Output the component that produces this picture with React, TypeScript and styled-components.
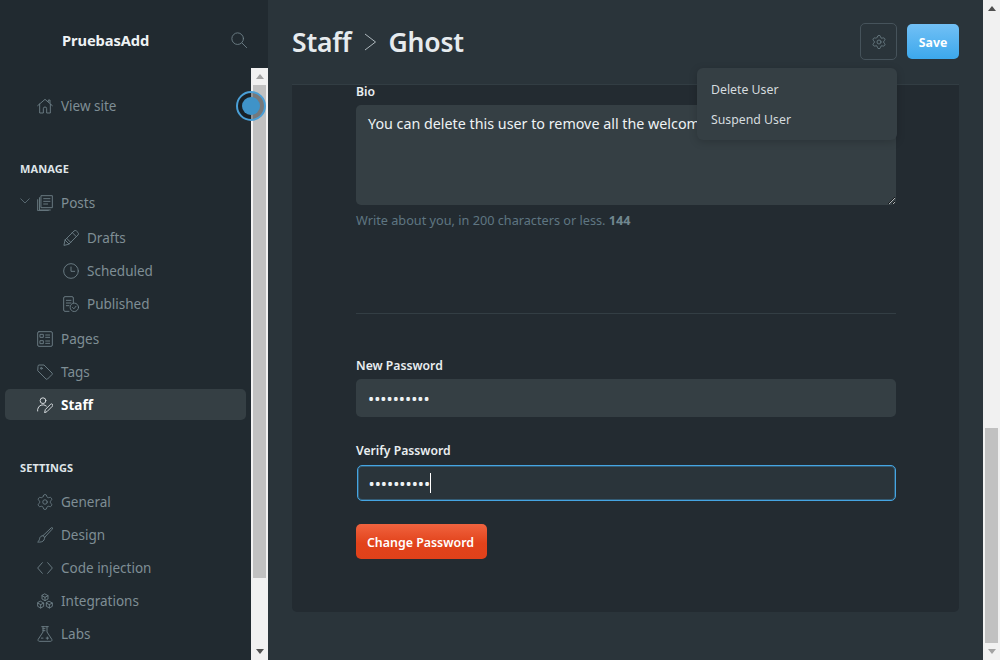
import React from "react";
import styled, { createGlobalStyle } from "styled-components";
import { Settings } from "lucide-react";

const Global = createGlobalStyle`
  html, body { margin: 0; padding: 0; height: 100%; overflow: hidden; background: #2a343a; }
  body { font-family: "Noto Sans", "Open Sans", sans-serif; }
  * { box-sizing: border-box; }
`;

const Page = styled.div`
  display: flex;
  width: 1000px;
  height: 660px;
  overflow: hidden;
  background: #2a343a;
`;
const Sidebar = styled.aside`
  display: flex;
  flex-direction: column;
  flex: 0 0 268px;
  background: #212a30;
`;
const Brand = styled.header`
  display: flex;
  align-items: center;
  justify-content: space-between;
  flex: 0 0 68px;
  padding: 12px 21px 0 62px;
`;
const BrandName = styled.span`
  color: #eef2f4;
  font-size: 14.7px;
  font-weight: 700;
  letter-spacing: -0.1px;
`;
const SideBody = styled.div`
  position: relative;
  display: flex;
  flex: 1;
  min-height: 0;
`;
const Nav = styled.nav`
  flex: 1;
  min-width: 0;
  overflow: hidden;
  padding: 22px 5px 0;
`;
const Section = styled.div<{ $top: number }>`
  padding-top: ${(p) => p.$top}px;
`;
const SectionTitle = styled.div`
  height: 16px;
  line-height: 16px;
  margin: 0 0 10px 15px;
  color: #dfe5e8;
  font-size: 11px;
  font-weight: 700;
  letter-spacing: 0.1px;
`;
const Row = styled.div<{ $active?: boolean; $sub?: boolean }>`
  position: relative;
  display: flex;
  align-items: center;
  gap: 8px;
  width: 241px;
  height: 31px;
  margin-bottom: 2px;
  padding-left: ${(p) => (p.$sub ? 58 : 32)}px;
  border-radius: 5px;
  background: ${(p) => (p.$active ? "#353f44" : "transparent")};
  color: ${(p) => (p.$active ? "#ffffff" : "#7f8e95")};
  font-size: 13.5px;
  font-weight: ${(p) => (p.$active ? 700 : 400)};
`;
const SubList = styled.div`
  padding: 2px 0;
`;
const Chevron = styled.span`
  position: absolute;
  left: 15px;
  top: 11px;
  display: flex;
  color: #5d6e76;
`;
const IconSvg = styled.svg<{ $light?: boolean }>`
  flex: 0 0 16px;
  width: 16px;
  height: 16px;
  fill: none;
  stroke: ${(p) => (p.$light ? "#e4e9ec" : "#6f8189")};
  stroke-width: 1.35;
  stroke-linecap: round;
  stroke-linejoin: round;
`;
const Track = styled.div`
  display: flex;
  flex-direction: column;
  flex: 0 0 17px;
  width: 17px;
  background: #f1f1f1;
`;
const Arrow = styled.div<{ $down?: boolean; $dim?: boolean }>`
  display: flex;
  align-items: center;
  justify-content: center;
  flex: 0 0 17px;
  &::before {
    content: "";
    border-left: 4.5px solid transparent;
    border-right: 4.5px solid transparent;
    ${(p) => (p.$down ? "border-top" : "border-bottom")}: 5px solid ${(p) => (p.$dim ? "#a3a3a3" : "#505050")};
  }
`;
const TrackBody = styled.div`
  flex: 1;
  padding: 0 2px;
`;
const Thumb = styled.div<{ $top: number; $height: number }>`
  margin-top: ${(p) => p.$top}px;
  height: ${(p) => p.$height}px;
  background: #c1c1c1;
`;
const Pulse = styled.div`
  position: absolute;
  left: 236px;
  top: 23px;
  width: 30px;
  height: 30px;
  border-radius: 50%;
  border: 2px solid #4a9fd6;
  background: rgba(14, 22, 28, 0.42);
  display: flex;
  align-items: center;
  justify-content: center;
  &::after {
    content: "";
    width: 18px;
    height: 18px;
    border-radius: 50%;
    background: #3f93c8;
  }
`;
const MainColumn = styled.main`
  flex: 1;
  min-width: 0;
  display: flex;
  flex-direction: column;
  padding: 0 24px;
`;
const TopBar = styled.header`
  display: flex;
  align-items: center;
  justify-content: space-between;
  flex: 0 0 85px;
  padding-bottom: 1px;
  border-bottom: 1px solid #323d43;
`;
const Title = styled.h1`
  display: flex;
  align-items: center;
  gap: 12px;
  margin: 0;
  color: #e6ebee;
  font-size: 26.5px;
  font-weight: 600;
  letter-spacing: -0.2px;
`;
const Actions = styled.div`
  display: flex;
  align-items: center;
  gap: 10px;
`;
const Menu = styled.div`
  position: relative;
`;
const GearButton = styled.button`
  display: flex;
  align-items: center;
  justify-content: center;
  width: 37px;
  height: 37px;
  padding: 0;
  border: 1px solid #46535b;
  border-radius: 5px;
  background: transparent;
  color: #6f8189;
`;
const Dropdown = styled.div`
  position: absolute;
  top: 45px;
  right: 0;
  z-index: 3;
  width: 200px;
  padding: 7px 0 5px;
  border-radius: 6px;
  background: #353f44;
  box-shadow: 0 2px 8px rgba(0, 0, 0, 0.18);
`;
const DropItem = styled.div`
  height: 30px;
  line-height: 30px;
  padding: 0 14px;
  color: #d5dcdf;
  font-size: 12.3px;
`;
const SaveButton = styled.button`
  width: 52px;
  height: 35px;
  padding: 1px 0 0;
  border: 0;
  border-radius: 5px;
  background: linear-gradient(#72c0f5, #3ca8ec);
  color: #fff;
  font-family: inherit;
  font-size: 12.3px;
  font-weight: 700;
`;
const Card = styled.section`
  padding: 0 63px 53px 64px;
  border-radius: 0 0 5px 5px;
  background: #232b31;
`;
const Label = styled.label<{ $top?: number; $gap?: number }>`
  display: block;
  margin-top: ${(p) => p.$top ?? 0}px;
  margin-bottom: ${(p) => p.$gap ?? 7}px;
  height: 13px;
  line-height: 13px;
  color: #e9eef0;
  font-size: 12.2px;
  font-weight: 600;
`;
const Bio = styled.textarea`
  display: block;
  width: 540px;
  height: 100px;
  padding: 9px 12px;
  border: 0;
  border-radius: 5px;
  outline: none;
  background: #353f44;
  color: #eef2f4;
  font-family: inherit;
  font-size: 14.3px;
  line-height: 20px;
`;
const Hint = styled.p`
  margin: 7px 0 0;
  line-height: 16px;
  color: #5f7682;
  font-size: 12.7px;
  b {
    font-weight: 700;
    color: #71878f;
  }
`;
const Rule = styled.hr`
  height: 1px;
  margin: 85px 0 45px;
  border: 0;
  background: #333e44;
`;
const FieldWrap = styled.div`
  position: relative;
`;
const Input = styled.input<{ $focus?: boolean }>`
  display: block;
  width: ${(p) => (p.$focus ? 539 : 540)}px;
  height: ${(p) => (p.$focus ? 36 : 38)}px;
  margin-left: ${(p) => (p.$focus ? 0.5 : 0)}px;
  padding: 0 ${(p) => (p.$focus ? 11 : 12)}px;
  border: ${(p) => (p.$focus ? "1px solid #45a5e2" : "0")};
  box-shadow: ${(p) => (p.$focus ? "inset 0 0 0 1px rgba(69,165,226,0.35)" : "none")};
  border-radius: 5px;
  outline: none;
  background: ${(p) => (p.$focus ? "#2a343a" : "#353f44")};
  color: #eef2f4;
  font-family: inherit;
  font-size: 16.4px;
`;
const Caret = styled.span`
  position: absolute;
  left: 74px;
  top: 8px;
  width: 1px;
  height: 20px;
  background: #fff;
`;
const DangerButton = styled.button`
  display: block;
  width: 131px;
  height: 35px;
  margin-top: 23px;
  padding: 1px 2px 0 0;
  border: 0;
  border-radius: 5px;
  background: linear-gradient(#f0633f 0%, #e2431b 55%, #e0411a 100%);
  color: #fff;
  font-family: inherit;
  font-size: 12.4px;
  font-weight: 600;
`;

const Icon = ({ children, light }: { children: React.ReactNode; light?: boolean }) => (
  <IconSvg viewBox="0 0 24 24" $light={light}>
    {children}
  </IconSvg>
);

const icons: Record<string, React.ReactNode> = {
  home: <path d="M1 11.5 12 2l11 9.5M4 9v13.5h5.5V16a2.5 2.5 0 0 1 5 0v6.5H20V9M17 5V3h2.5v4.2" />,
  posts: <path d="M6.5 1h16.5v18H6.5zM3.7 4v18.5H20M1 7v16.5h16M10 5.5h9.5M10 9.5h9.5M10 13.5h6" />,
  pencil: <path d="M1.5 22.5 3 15 16.5 1.5a2.6 2.6 0 0 1 3.7 0l2.3 2.3a2.6 2.6 0 0 1 0 3.7L9 21zM3 15l6 6M14 4l6 6M5.5 12.5l6 6" />,
  clock: (
    <>
      <circle cx="12" cy="12" r="11" />
      <path d="M12 6v6.5h5.5" />
    </>
  ),
  published: (
    <>
      <path d="M15.5 10V3a2 2 0 0 0-2-2H3a2 2 0 0 0-2 2v18a2 2 0 0 0 2 2h6M5 6.5h7M5 10.5h7M5 14.5h4" />
      <circle cx="17" cy="17" r="6.3" />
      <path d="m14.3 17.2 2 2 3.2-3.8" />
    </>
  ),
  pages: (
    <>
      <rect x="1" y="1" width="22" height="22" rx="2" />
      <path d="M5 5h4.5v4.5H5zM5 14.5h4.5V19H5zM13 6h6M13 9.5h6M13 15h6M13 18.5h6" />
    </>
  ),
  tag: (
    <>
      <path d="M1.5 3A1.5 1.5 0 0 1 3 1.5h7.5l12 12a1.6 1.6 0 0 1 0 2.3l-6.7 6.7a1.6 1.6 0 0 1-2.3 0l-12-12z" />
      <circle cx="6.5" cy="6.5" r="1.3" />
    </>
  ),
  staff: (
    <>
      <circle cx="9" cy="5.5" r="4.3" />
      <path d="M1 21v-2.5a8 8 0 0 1 13-5M11.5 23l1-4.2 8-8a2 2 0 0 1 2.8 2.8l-8 8z" />
    </>
  ),
  brush: <path d="M23 1.500c-.6-.6-1.400-.6-2 0L9 13l2.500 2.500L22.500 3.500c.6-.6 1.100-1.400.5-2zM9 13c-2.500 0-4.500 1.500-5 4-.3 2-1 4-3 5.500 3.500.5 8 0 9.500-3 .7-1.500.8-2.700 1-4" />,
  code: <path d="M8 4 1 12l7 8M16 4l7 8-7 8" />,
  integrations: (
    <path d="M12 1.500 16.500 4v5L12 11.500 7.500 9V4zM7.500 4 12 6.500 16.500 4M12 6.500v5M5.500 12.500 10 15v5l-4.500 2.500L1 20v-5zM1 15l4.500 2.500L10 15M5.500 17.500v5M18.500 12.500 23 15v5l-4.500 2.500L14 20v-5zM14 15l4.500 2.500L23 15M18.500 17.500v5" />
  ),
  labs: (
    <path d="M7 1h10M9 1v8L1.800 20a2 2 0 0 0 1.700 3h17a2 2 0 0 0 1.700-3L15 9V1M9 4h3M9 7h3M15.500 16.500v3.500M13.700 18.200h3.600M6.500 18.200h2.500" />
  ),
};

const NavItem = ({ icon, label, sub, active }: { icon: string; label: string; sub?: boolean; active?: boolean }) => (
  <Row $sub={sub} $active={active}>
    <Icon light={active}>{icons[icon]}</Icon>
    {label}
  </Row>
);

const GeneralGear = styled(Settings)`
  flex: 0 0 18px;
  margin: 0 -1px;
  color: #6f8189;
`;

export default function App() {
  return (
    <Page>
      <Global />
      <Sidebar>
        <Brand>
          <BrandName>PruebasAdd</BrandName>
          <Icon>
            <circle cx="10" cy="10" r="8.700" />
            <path d="m16.500 16.500 7 7" />
          </Icon>
        </Brand>
        <SideBody>
          <Nav>
            <NavItem icon="home" label="View site" />
            <Section $top={38}>
              <SectionTitle>MANAGE</SectionTitle>
              <Row>
                <Chevron>
                  <svg width="10" height="6" viewBox="0 0 10 6" fill="none" stroke="currentColor" strokeWidth="0.9">
                    <path d="m.5.500 4.500 4.500L9.500.500" />
                  </svg>
                </Chevron>
                <Icon>{icons.posts}</Icon>
                Posts
              </Row>
              <SubList>
                <NavItem sub icon="pencil" label="Drafts" />
                <NavItem sub icon="clock" label="Scheduled" />
                <NavItem sub icon="published" label="Published" />
              </SubList>
              <NavItem icon="pages" label="Pages" />
              <NavItem icon="tag" label="Tags" />
              <NavItem active icon="staff" label="Staff" />
            </Section>
            <Section $top={38}>
              <SectionTitle>SETTINGS</SectionTitle>
              <Row>
                <GeneralGear size={18} strokeWidth={1.100} />
                General
              </Row>
              <NavItem icon="brush" label="Design" />
              <NavItem icon="code" label="Code injection" />
              <NavItem icon="integrations" label="Integrations" />
              <NavItem icon="labs" label="Labs" />
            </Section>
          </Nav>
          <Track>
            <Arrow $dim />
            <TrackBody>
              <Thumb $top={0} $height={493} />
            </TrackBody>
            <Arrow $down />
          </Track>
          <Pulse />
        </SideBody>
      </Sidebar>
      <MainColumn>
        <TopBar>
          <Title>
            Staff
            <svg width="13" height="18" viewBox="0 0 13 18" fill="none" stroke="#aeb8bd" strokeWidth="1">
              <path d="m1 1 10.500 8L1 17" />
            </svg>
            Ghost
          </Title>
          <Actions>
            <Menu>
              <GearButton aria-label="Settings">
                <Settings size={16} strokeWidth={1.200} />
              </GearButton>
              <Dropdown>
                <DropItem>Delete User</DropItem>
                <DropItem>Suspend User</DropItem>
              </Dropdown>
            </Menu>
            <SaveButton>Save</SaveButton>
          </Actions>
        </TopBar>
        <Card>
          <Label>Bio</Label>
          <Bio readOnly value="You can delete this user to remove all the welcome posts" />
          <Hint>
            Write about you, in 200 characters or less. <b>144</b>
          </Hint>
          <Rule />
          <Label>New Password</Label>
          <Input type="password" readOnly value="••••••••••" />
          <Label $top={27} $gap={8}>
            Verify Password
          </Label>
          <FieldWrap>
            <Input $focus type="password" readOnly value="••••••••••" />
            <Caret />
          </FieldWrap>
          <DangerButton>Change Password</DangerButton>
        </Card>
      </MainColumn>
      <Track>
        <Arrow />
        <TrackBody>
          <Thumb $top={411} $height={215} />
        </TrackBody>
        <Arrow $down $dim />
      </Track>
    </Page>
  );
}
